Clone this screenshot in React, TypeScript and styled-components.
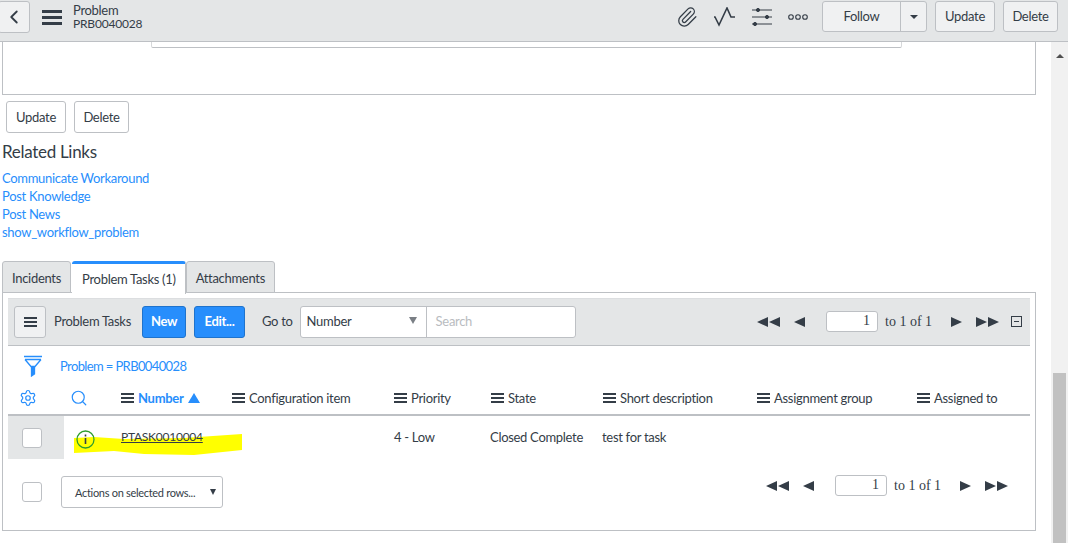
import React from "react";
import styled, { createGlobalStyle } from "styled-components";
import { Paperclip, Settings, Search, ChevronLeft } from "lucide-react";

const Global = createGlobalStyle`
  html, body { margin: 0; padding: 0; background: #fff; }
  body { font-family: Lato, "Liberation Sans", sans-serif; font-size: 13px; letter-spacing: -0.3px; color: #343d47; }
  * { box-sizing: border-box; }
`;

const Page = styled.div`
  width: 1068px; height: 543px; overflow: hidden; display: flex; flex-direction: column; background: #fff;
`;
const Header = styled.header`
  height: 42px; flex: none; display: flex; align-items: flex-start; background: #e4e6e7;
  border-bottom: 1px solid #bdc0c4; padding-top: 1px;
`;
const BackButton = styled.div`
  width: 32px; height: 32px; margin-left: -2px; display: flex; align-items: center; justify-content: center;
  background: #f0f1f2; border: 1px solid #bdc0c4; border-radius: 3px; color: #343d47;
`;
const Burger = styled.div`
  width: 20px; margin: 9px 0 0 12px; display: flex; flex-direction: column; gap: 3px;
  & > i { display: block; height: 3px; background: #343d47; }
`;
const TitleBlock = styled.div`
  margin: 3px 0 0 11px; line-height: 13px; font-size: 13px; color: #343d47;
  & > div { height: 13px; }
`;
const TitleNumber = styled.div`
  font-size: 12px; letter-spacing: -0.2px;
`;
const HeaderRight = styled.div`
  margin-left: auto; display: flex; align-items: flex-start; padding-right: 10px;
`;
const HeaderIcons = styled.div`
  display: flex; align-items: center; gap: 16px; height: 32px; margin-right: 14px; color: #343d47;
`;
const Button = styled.div<{ $plain?: boolean; $w?: number }>`
  width: ${p => (p.$w ? `${p.$w}px` : "auto")};
  height: 32px; padding: 0 0 1px; display: flex; align-items: center; justify-content: center;
  background: ${p => (p.$plain ? "#fff" : "#f0f1f2")}; border: 1px solid #bdc0c4; border-radius: 3px; font-size: 13px; color: #343d47;
`;
const HeaderButton = styled(Button)`
  margin-left: 8px; height: 31px;
`;
const Follow = styled.div`
  display: flex; height: 31px; border: 1px solid #bdc0c4; border-radius: 3px; background: #f0f1f2;
`;
const FollowLabel = styled.div`
  width: 78px; padding-bottom: 1px; display: flex; align-items: center; justify-content: center; border-right: 1px solid #bdc0c4;
`;
const FollowCaret = styled.div`
  width: 25px; display: flex; align-items: center; justify-content: center;
`;
const Caret = styled.span`
  display: block; width: 0; height: 0; border-left: 4px solid transparent; border-right: 4px solid transparent;
  border-top: 4px solid #343d47;
`;
const Body = styled.div`
  flex: 1; min-height: 0; display: flex;
`;
const Content = styled.main`
  flex: 1; min-width: 0; padding-left: 2px;
`;
const Scrollbar = styled.div`
  width: 17px; margin-left: 15px; background: #f1f1f1; display: flex; flex-direction: column; align-items: center;
`;
const ScrollArrow = styled.span`
  margin-top: 12px; width: 0; height: 0; border-left: 4px solid transparent; border-right: 4px solid transparent;
  border-bottom: 4px solid #505050;
`;
const ScrollThumb = styled.div`
  margin-top: 315px; width: 13px; flex: 1; background: #c1c1c1;
`;
const FormCard = styled.div`
  width: 1034px; height: 53px; border: 1px solid #bdc0c4; border-top: none; padding-left: 148px;
`;
const ClippedField = styled.div`
  width: 751px; height: 6px; border-bottom: 1px solid #bdc0c4;
  border-left: 1px solid #d6d8da; border-right: 1px solid #d6d8da; border-radius: 0 0 2px 2px;
`;
const FormActions = styled.div`
  display: flex; gap: 8px; margin: 6px 0 0 4px;
`;
const LinksTitle = styled.h2`
  margin: 8px 0 0; font-size: 17px; line-height: 21px; font-weight: 400; color: #343d47;
`;
const LinkList = styled.div`
  display: flex; flex-direction: column; margin-top: 7px;
`;
const LinkItem = styled.a`
  height: 18px; line-height: 18px; font-size: 13px; color: #278efc;
`;
const Tabs = styled.div`
  display: flex; margin-top: 20px; position: relative; z-index: 1; height: 32px;
`;
const Tab = styled.div<{ $active?: boolean }>`
  height: ${p => (p.$active ? "33px" : "32px")};
  margin-left: ${p => (p.$active ? "1px" : "0")};
  padding: ${p => (p.$active ? "0 9px 1px 10px" : "1px 9px 0")}; display: flex; align-items: center; font-size: 13px; color: #343d47;
  background: ${p => (p.$active ? "#fff" : "#e4e6e7")};
  border: 1px solid #bdc0c4;
  border-top: ${p => (p.$active ? "3px solid #278efc" : "1px solid #bdc0c4")};
  border-bottom: ${p => (p.$active ? "none" : "1px solid #bdc0c4")};
  border-left: ${p => (p.$active ? "none" : "1px solid #bdc0c4")};
  border-radius: 3px 3px 0 0;
`;
const Panel = styled.section`
  width: 1034px; height: 239px; margin-top: -1px; border: 1px solid #bdc0c4; padding: 5px 5px 0;
`;
const Toolbar = styled.div`
  height: 48px; display: flex; align-items: center; background: #e4e6e7; border-bottom: 1px solid #bdc0c4;
  border-top: 1px solid #dcdee0; padding: 0 0 1px 6px; width: 1022px;
`;
const MenuButton = styled(Button)`
  width: 32px; padding: 0; flex-direction: column; gap: 2px;
  & > i { display: block; width: 13px; height: 2px; background: #343d47; }
`;
const ToolbarLabel = styled.span`
  margin-left: 8px; font-size: 13px; padding-bottom: 2px;
`;
const Primary = styled.div<{ $w: number; $gap: number }>`
  width: ${p => p.$w}px; height: 32px; margin-left: ${p => p.$gap}px; padding-bottom: 2px; display: flex; align-items: center; justify-content: center;
  background: #278efc; border: 1px solid #1f73cc; border-radius: 3px; color: #fff; font-weight: 700; font-size: 13px;
`;
const GoTo = styled.span`
  margin: 0 7px 0 17px; padding-bottom: 2px;
`;
const SearchGroup = styled.div`
  display: flex; width: 276px; height: 32px; background: #fff; border: 1px solid #bdc0c4; border-radius: 3px;
`;
const SelectPart = styled.div`
  width: 126px; padding: 0 6px 2px; display: flex; align-items: center; justify-content: space-between;
  border-right: 1px solid #bdc0c4;
`;
const GreyCaret = styled.span`
  width: 0; height: 0; margin-right: 3px; border-left: 4px solid transparent; border-right: 4px solid transparent;
  border-top: 7px solid #7a7f85;
`;
const SearchHint = styled.div`
  padding: 0 0 2px 9px; display: flex; align-items: center; color: #b9bcbf;
`;
const Pager = styled.div<{ $right: number; $bottom: number }>`
  margin-left: auto; display: flex; align-items: center;
  padding: 0 ${p => p.$right}px ${p => p.$bottom}px 0;
`;
const PageInput = styled.div`
  width: 52px; height: 21px; margin: 0 7px 0 20px; padding-right: 7px; text-align: right; line-height: 18px;
  background: #fff; border: 1px solid #bdc0c4; border-radius: 3px; letter-spacing: 0;
  font-family: "Liberation Serif", serif; font-size: 14px;
`;
const PageText = styled.span`
  width: 46px; margin-right: 19px; font-family: "Liberation Serif", serif; font-size: 14px; letter-spacing: 0; white-space: nowrap;
`;
const PagerGap = styled.span`
  width: 13px;
`;
const Collapse = styled.span`
  width: 11px; height: 11px; margin-left: 12px; border: 1px solid #343d47; display: flex; align-items: center; justify-content: center;
  &::after { content: ""; width: 5px; height: 1px; background: #343d47; }
`;
const FilterRow = styled.div`
  display: flex; align-items: center; height: 39px; padding: 1px 0 0 15px; color: #278efc;
`;
const FilterText = styled.span`
  margin-left: 17px; letter-spacing: -0.62px;
`;
const Grid = styled.div`
  display: grid; width: 1022px;
  grid-template-columns: 56px 57px 111px 162px 97px 112px 154px 160px 113px;
`;
const HeadCell = styled.div<{ $blue?: boolean }>`
  height: 31px; display: flex; align-items: center; gap: 4px; color: ${p => (p.$blue ? "#278efc" : "#343d47")};
  font-weight: ${p => (p.$blue ? 700 : 400)}; font-size: 13px;
  border-bottom: 2px solid #bdc0c4; padding-bottom: 3px;
`;
const IconHead = styled(HeadCell)`
  padding-left: 11px;
`;
const IconHeadSearch = styled(HeadCell)`
  padding-left: 6px;
`;
const ColLines = styled.span`
  display: flex; flex-direction: column; gap: 2px; width: 13px;
  & > i { display: block; height: 2px; background: currentColor; }
  color: #343d47;
`;
const Cell = styled.div<{ $x?: number }>`
  height: 43px; padding-bottom: 2px; display: flex; align-items: center; font-size: 13px; margin-left: ${p => p.$x ?? -1}px;
`;
const CheckCell = styled.div`
  height: 43px; display: flex; align-items: center; justify-content: center; background: #e4e6e7; padding-right: 8px;
`;
const Check = styled.span`
  display: block; flex: none; width: 20px; height: 20px; background: #fff; border: 1px solid #bdc0c4; border-radius: 3px;
`;
const InfoCell = styled.div`
  height: 43px; display: flex; align-items: center; padding: 3px 0 0 12px; position: relative;
`;
const Highlight = styled.svg`
  position: absolute; left: 10px; top: 16px; width: 170px; height: 26px; z-index: 0;
`;
const InfoIcon = styled.svg`
  position: relative; z-index: 1;
`;
const TaskLink = styled.a`
  position: relative; z-index: 1; font-size: 12px; letter-spacing: -0.25px; color: #343d47; text-decoration: underline;
`;
const Footer = styled.div`
  display: flex; align-items: center; padding: 2px 0 0 14px; width: 1022px; height: 64px;
`;
const ActionSelect = styled.div`
  width: 162px; height: 32px; margin-left: 19px; padding: 0 6px 0 13px; display: flex; align-items: center; justify-content: space-between;
  background: #fff; border: 1px solid #bdc0c4; border-radius: 3px; font-size: 11px; white-space: nowrap;
`;
const DarkCaret = styled(GreyCaret)`
  margin: 0; border-top-color: #343d47; border-left-width: 3px; border-right-width: 3px; border-top-width: 6px;
`;

const Tri = ({ d, w = 12 }: { d: string; w?: number }) => (
  <svg width={w} height="12" viewBox={`0 0 ${w} 12`} fill="#343d47"><path d={d} /></svg>
);
const First = () => <Tri w={24} d="M0 6 11 1V11ZM12 6 23 1V11Z" />;
const Prev = () => <Tri d="M0 6 11 1V11Z" />;
const Next = () => <Tri d="M1 1 12 6 1 11Z" />;
const Last = () => <Tri w={24} d="M1 1 12 6 1 11ZM13 1 24 6 13 11Z" />;

const PagerControls = ({ collapse, right, bottom }: { collapse?: boolean; right: number; bottom: number }) => (
  <Pager $right={right} $bottom={bottom}>
    <First />
    <PagerGap />
    <Prev />
    <PageInput>1</PageInput>
    <PageText>to 1 of 1</PageText>
    <Next />
    <PagerGap />
    <Last />
    {collapse && <Collapse />}
  </Pager>
);

const Col = ({ label, blue }: { label: string; blue?: boolean }) => (
  <HeadCell $blue={blue}>
    <ColLines><i /><i /><i /></ColLines>
    {label}
    {blue && <svg width="12" height="10" viewBox="0 0 12 10" fill="#278efc" style={{ marginLeft: 1 }}><path d="M6 0 12 10H0Z" /></svg>}
  </HeadCell>
);

export default function App() {
  return (
    <Page>
      <Global />
      <Header>
        <BackButton><ChevronLeft size={22} strokeWidth={2} /></BackButton>
        <Burger><i /><i /><i /></Burger>
        <TitleBlock><div>Problem</div><TitleNumber>PRB0040028</TitleNumber></TitleBlock>
        <HeaderRight>
          <HeaderIcons>
            <Paperclip size={22} strokeWidth={1.4} />
            <svg width="22" height="20" viewBox="0 0 22 20" fill="none" stroke="#343d47" strokeWidth="1.6"><path d="M0 10h1l4 8 8-17 4 9h4" /></svg>
            <svg width="20" height="20" viewBox="0 0 20 20" fill="#343d47" stroke="#343d47"><path d="M0 3h20M0 10h20M0 17h20" strokeWidth="1.2" /><circle cx="6" cy="3" r="1.6" /><circle cx="15" cy="10" r="1.6" /><circle cx="3" cy="17" r="1.6" /></svg>
            <svg width="20" height="8" viewBox="0 0 20 8" fill="none" stroke="#343d47" strokeWidth="1.1"><circle cx="3" cy="4" r="2.3" /><circle cx="10" cy="4" r="2.3" /><circle cx="17" cy="4" r="2.3" /></svg>
          </HeaderIcons>
          <Follow>
            <FollowLabel>Follow</FollowLabel>
            <FollowCaret><Caret /></FollowCaret>
          </Follow>
          <HeaderButton $w={60}>Update</HeaderButton>
          <HeaderButton $w={55}>Delete</HeaderButton>
        </HeaderRight>
      </Header>
      <Body>
        <Content>
          <FormCard><ClippedField /></FormCard>
          <FormActions>
            <Button $plain $w={60}>Update</Button>
            <Button $plain $w={55}>Delete</Button>
          </FormActions>
          <LinksTitle>Related Links</LinksTitle>
          <LinkList>
            <LinkItem>Communicate Workaround</LinkItem>
            <LinkItem>Post Knowledge</LinkItem>
            <LinkItem>Post News</LinkItem>
            <LinkItem>show_workflow_problem</LinkItem>
          </LinkList>
          <Tabs>
            <Tab>Incidents</Tab>
            <Tab $active>Problem Tasks (1)</Tab>
            <Tab>Attachments</Tab>
          </Tabs>
          <Panel>
            <Toolbar>
              <MenuButton><i /><i /><i /></MenuButton>
              <ToolbarLabel>Problem Tasks</ToolbarLabel>
              <Primary $w={44} $gap={11}>New</Primary>
              <Primary $w={51} $gap={8}>Edit...</Primary>
              <GoTo>Go to</GoTo>
              <SearchGroup>
                <SelectPart>Number<GreyCaret /></SelectPart>
                <SearchHint>Search</SearchHint>
              </SearchGroup>
              <PagerControls collapse right={8} bottom={0} />
            </Toolbar>
            <FilterRow>
              <svg width="20" height="22" viewBox="0 0 20 22" fill="none" stroke="#278efc" strokeWidth="1.3"><path d="M1 1.5h18M2 4.5h16M2 4.5l6 7h4l6-7" /><path d="M8.5 12v9l3-2v-7" fill="#278efc" /></svg>
              <FilterText>Problem = PRB0040028</FilterText>
            </FilterRow>
            <Grid>
              <IconHead><Settings size={18} color="#278efc" strokeWidth={1.6} /></IconHead>
              <IconHeadSearch><Search size={18} color="#278efc" strokeWidth={1.6} /></IconHeadSearch>
              <Col label="Number" blue />
              <Col label="Configuration item" />
              <Col label="Priority" />
              <Col label="State" />
              <Col label="Short description" />
              <Col label="Assignment group" />
              <Col label="Assigned to" />

              <CheckCell><Check /></CheckCell>
              <InfoCell>
                <Highlight viewBox="0 0 170 26">
                  <path fill="#ffff00" d="M0 6 20 5 50 7 110 6 168 2 168 18 120 23 70 22 40 19 0 21Z" />
                </Highlight>
                <InfoIcon width="19" height="19" viewBox="0 0 19 19" fill="none" stroke="#2e9d2e" strokeWidth="1.3">
                  <circle cx="9.5" cy="9.5" r="8.5" />
                  <path d="M9.5 8v6M9.5 4.5v2" stroke="#343d47" strokeWidth="1.6" />
                </InfoIcon>
              </InfoCell>
              <Cell $x={0}><TaskLink>PTASK0010004</TaskLink></Cell>
              <Cell />
              <Cell $x={0}>4 - Low</Cell>
              <Cell>Closed Complete</Cell>
              <Cell>test for task</Cell>
              <Cell />
              <Cell />
            </Grid>
            <Footer>
              <Check />
              <ActionSelect>Actions on selected rows...<DarkCaret /></ActionSelect>
              <PagerControls right={22} bottom={13} />
            </Footer>
          </Panel>
        </Content>
        <Scrollbar>
          <ScrollArrow />
          <ScrollThumb />
        </Scrollbar>
      </Body>
    </Page>
  );
}
